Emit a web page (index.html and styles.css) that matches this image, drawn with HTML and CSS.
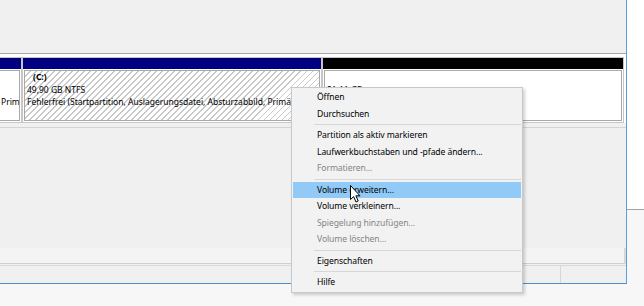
FILE: index.html
```html
<!DOCTYPE html>
<html lang="de">
<head>
<meta charset="utf-8">
<title>Datenträgerverwaltung</title>
<link rel="stylesheet" href="styles.css">
</head>
<body>
<div class="screen">
  <div class="window">
    <div class="top-pane"></div>
    <div class="disk-row">
      <div class="partitions">
        <div class="part part-a">
          <div class="bar navy"></div>
          <div class="box"><div class="inner"><div class="line">&nbsp;</div><div class="line">&nbsp;</div><div class="line">Primäre Partition)</div></div></div>
        </div>
        <div class="part part-c">
          <div class="bar navy"></div>
          <div class="box"><div class="inner hatched"><div class="line name">(C:)</div><div class="line">49,90 GB NTFS</div><div class="line">Fehlerfrei (Startpartition, Auslagerungsdatei, Absturzabbild, Primäre Partition)</div></div></div>
        </div>
        <div class="part part-u">
          <div class="bar black"></div>
          <div class="box"><div class="inner"><div class="line">&nbsp;</div><div class="line">21,11 GB</div><div class="line">Nicht zugeordnet</div></div></div>
        </div>
      </div>
      <div class="row-gap"></div>
    </div>
    <div class="lower-pane"></div>
    <div class="scroll-strip"></div>
    <div class="statusbar"><div class="pane pane-main"></div><div class="pane pane-side"></div></div>
  </div>
  <div class="side"></div>
</div>

<div class="menu">
  <div class="item">Öffnen</div>
  <div class="item">Durchsuchen</div>
  <div class="sep"></div>
  <div class="item">Partition als aktiv markieren</div>
  <div class="item">Laufwerkbuchstaben und -pfade ändern...</div>
  <div class="item disabled">Formatieren...</div>
  <div class="sep"></div>
  <div class="item hover">Volume erweitern...</div>
  <div class="item">Volume verkleinern...</div>
  <div class="item disabled">Spiegelung hinzufügen...</div>
  <div class="item disabled">Volume löschen...</div>
  <div class="sep"></div>
  <div class="item">Eigenschaften</div>
  <div class="sep"></div>
  <div class="item">Hilfe</div>
</div>

<svg class="cursor" width="12" height="19" viewBox="0 0 12 19">
  <path d="M0.5 0.5 L0.5 14.5 L3.6 11.6 L6 17 L8.2 16 L5.9 10.8 L10 10.8 Z" fill="#fff" stroke="#000" stroke-width="1" stroke-linejoin="miter"/>
</svg>
</body>
</html>
```

FILE: styles.css
```css
html, body {
  margin: 0;
  padding: 0;
}
body {
  width: 644px;
  height: 306px;
  overflow: hidden;
  background: #f7f7f7;
  font-family: "Noto Sans", "Open Sans", sans-serif;
  position: relative;
}
.screen {
  display: flex;
  align-items: flex-start;
  height: 284px;
}
.window {
  width: 626px;
  height: 283px;
  border-right: 1px solid #5c9fd8;
  border-bottom: 1px solid #4f8fcd;
  background: #f0f0f0;
  display: flex;
  flex-direction: column;
  flex-shrink: 0;
}
.top-pane {
  height: 53px;
  border-bottom: 1px solid #a9a9a9;
  flex-shrink: 0;
}
.disk-row {
  background: #ffffff;
  padding-top: 3px;
  border-bottom: 1px solid #d4d4d4;
  flex-shrink: 0;
}
.partitions {
  display: flex;
  height: 66px;
}
.part {
  border: 1px solid #c6c6c6;
  display: flex;
  flex-direction: column;
  box-sizing: border-box;
  overflow: hidden;
}
.part-a {
  width: 22px;
  border-left: none;
}
.part-c {
  width: 300px;
}
.part-u {
  width: 302px;
}
.bar {
  height: 11px;
  flex-shrink: 0;
}
.bar.navy { background: #000080; }
.bar.black { background: #000000; }
.box {
  flex: 1;
  padding: 1px;
  background: #ffffff;
  display: flex;
}
.part-a .box { padding-left: 0; }
.inner {
  flex: 1;
  border: 1px solid #a8a8a8;
  padding-left: 2px;
  overflow: hidden;
  white-space: nowrap;
  font-size: 8.5px;
  color: #000;
}
.part-a .inner {
  border-left: none;
  padding-left: 1px;
}
.inner.hatched {
  background: repeating-linear-gradient(135deg, #ffffff 0px, #ffffff 3.2px, #c9c9c9 3.2px, #c9c9c9 4.25px);
}
.line {
  height: 12.7px;
  line-height: 12.7px;
}
.line.name {
  font-weight: bold;
  padding-left: 6px;
}
.row-gap {
  height: 4px;
  background: #f0f0f0;
}
.lower-pane {
  height: 120px;
  flex-shrink: 0;
}
.scroll-strip {
  height: 15px;
  background: #f4f4f4;
  border-bottom: 1px solid #cfcfcf;
  border-right: 2px solid #d8d8d8;
  margin-bottom: 1px;
  flex-shrink: 0;
}
.statusbar {
  flex: 1;
  display: flex;
  border-top: 1px solid #dadada;
}
.pane-main {
  width: 560px;
  border-right: 1px solid #d6d6d6;
}
.pane-side {
  flex: 1;
}
.side {
  flex: 1;
  height: 209px;
  background: #ffffff;
  border-bottom: 1px solid #a3a3a3;
}
.menu {
  position: absolute;
  left: 291px;
  top: 87px;
  width: 230px;
  padding: 1px 0;
  background: #f2f2f2;
  border: 1px solid #c8c8c8;
  box-shadow: 2px 2px 3px rgba(0, 0, 0, 0.18);
  font-size: 8.6px;
  letter-spacing: -0.1px;
  color: #000;
}
.item {
  height: 16.5px;
  line-height: 16.5px;
  margin: 0 1px;
  padding-left: 24px;
  white-space: nowrap;
}
.item.hover {
  background: #91c9f7;
}
.item.disabled {
  color: #858585;
}
.sep {
  height: 5.1px;
  position: relative;
  margin-left: 22px;
  margin-right: 1px;
}
.sep::after {
  content: "";
  position: absolute;
  left: 0;
  right: 0;
  top: 2px;
  height: 1px;
  background: #d7d7d7;
}
.cursor {
  position: absolute;
  left: 350px;
  top: 185px;
}
```
